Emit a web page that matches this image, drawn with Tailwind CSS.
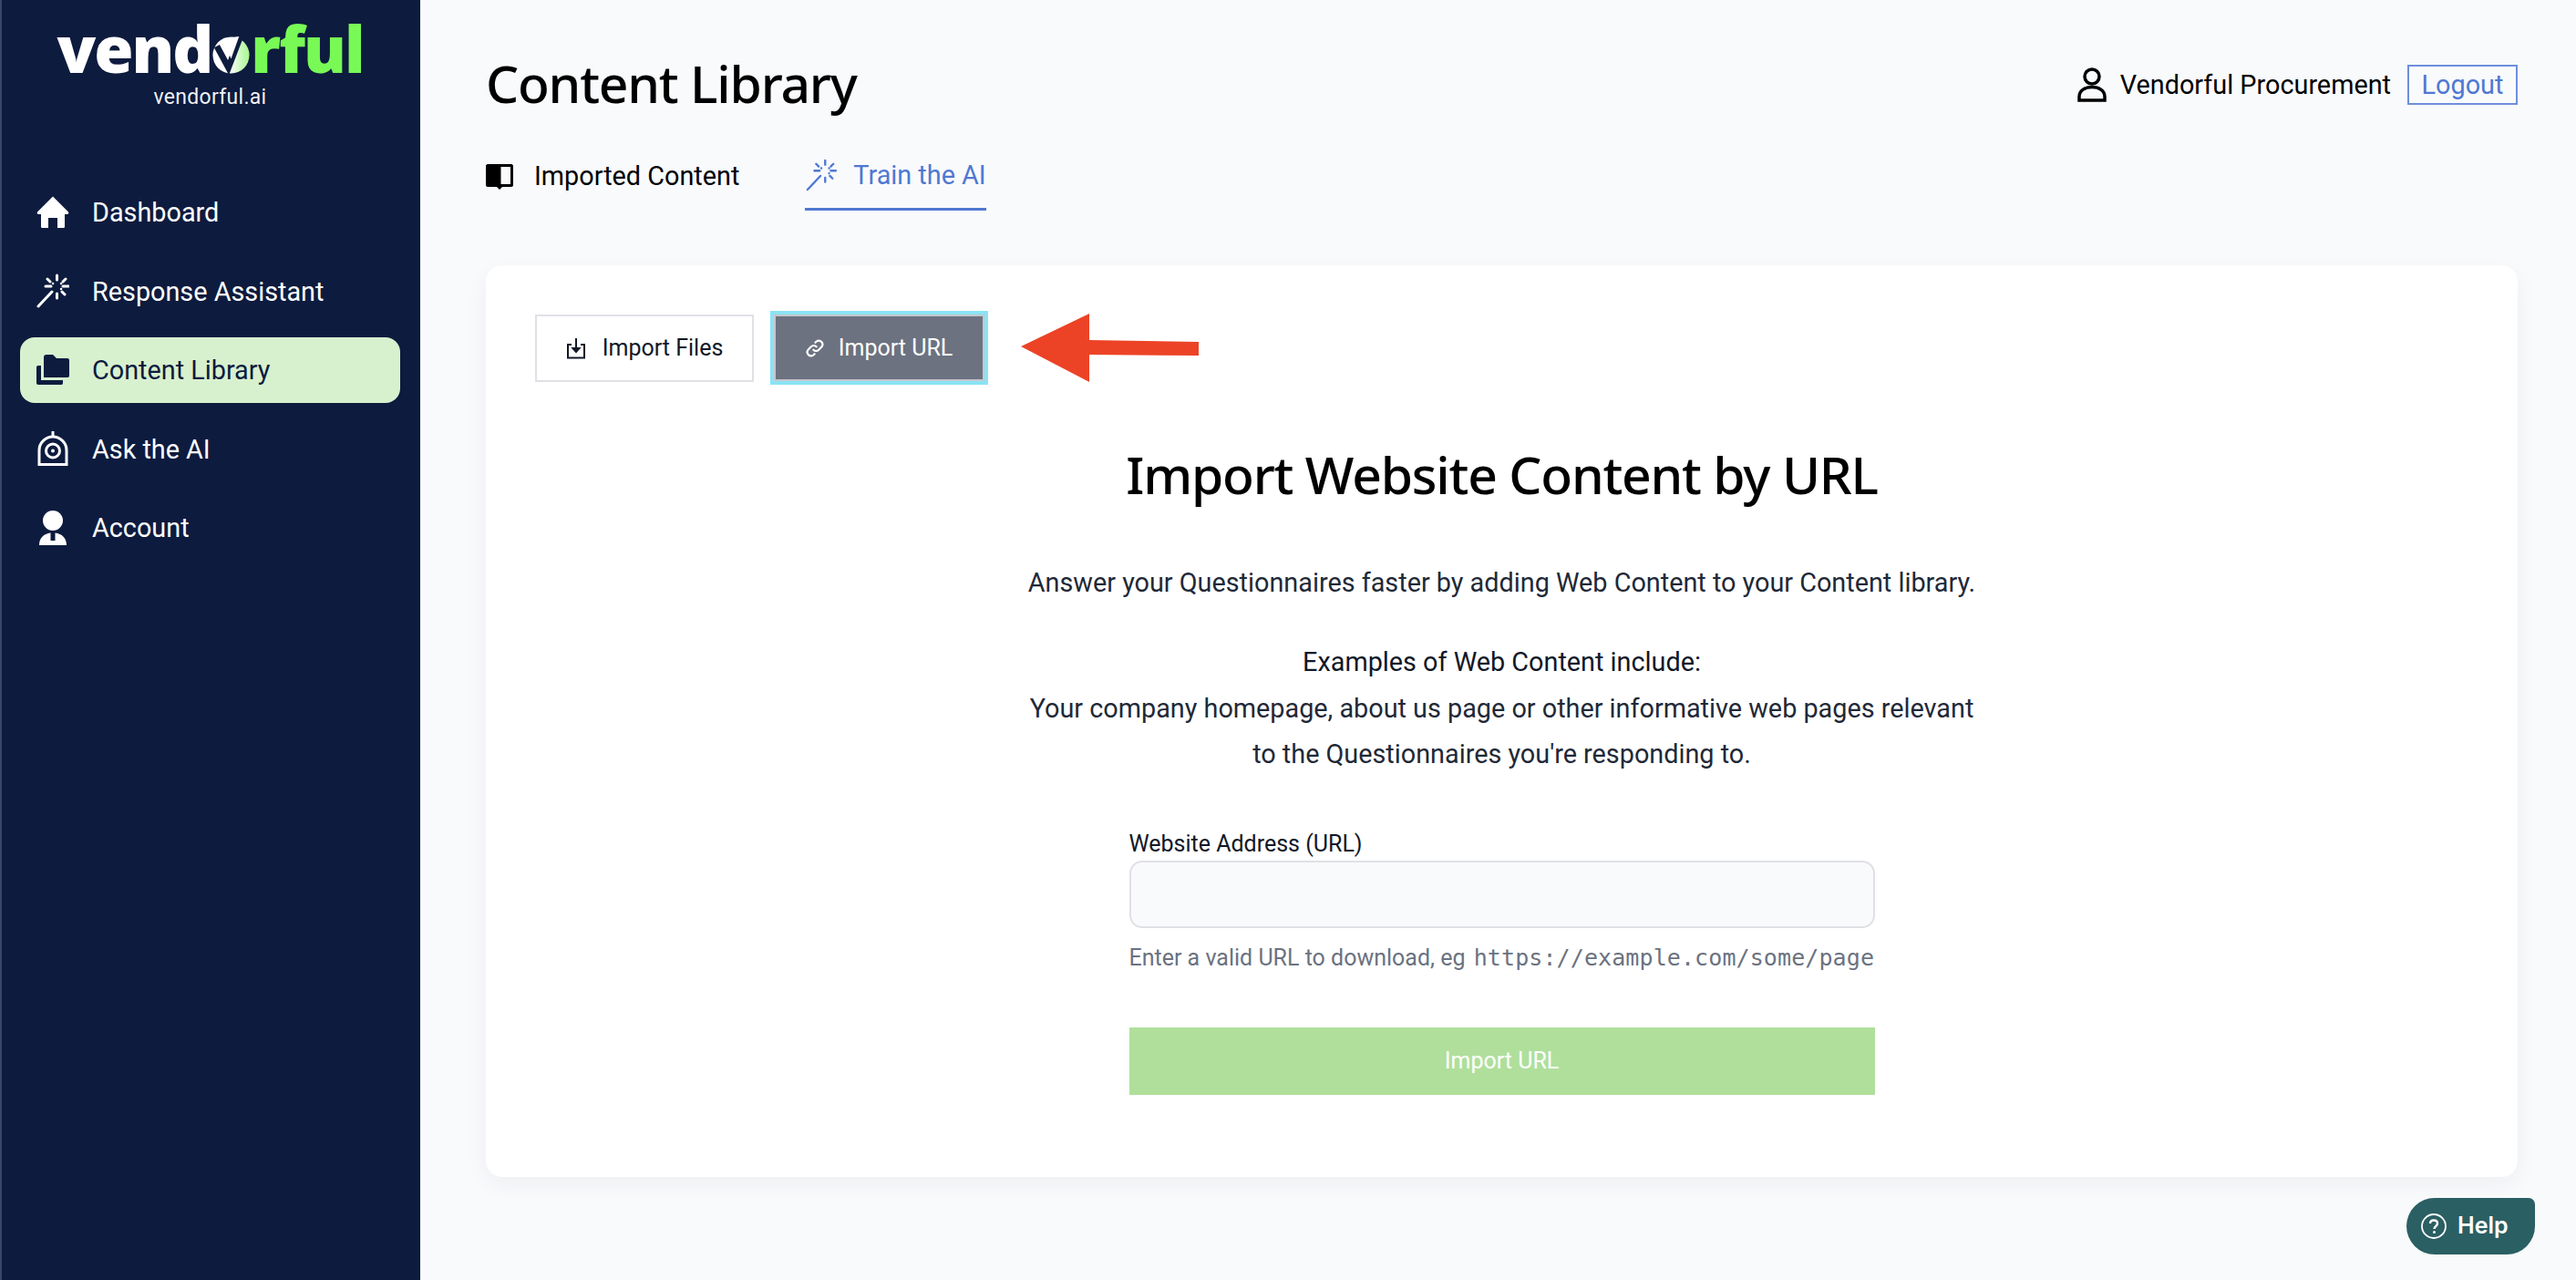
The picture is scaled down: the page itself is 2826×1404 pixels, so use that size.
<!doctype html>
<html lang="en">
<head>
<meta charset="utf-8">
<title>Content Library</title>
<script src="https://cdn.jsdelivr.net/npm/@tailwindcss/browser@4"></script>
</head>
<body class="bg-[#f9fafc] font-['Roboto',sans-serif] text-[28.8px]">
<div class="flex h-[1404px] w-[2826px] overflow-hidden">

  <!-- Sidebar -->
  <aside class="w-[461px] shrink-0 h-full bg-[#0d1b3e] border-l-2 border-[#3a4767] text-white">
    <div class="flex flex-col items-center pt-[25px] h-[197px] pr-[2px]">
      <div class="flex items-end h-[56px] font-['Open_Sans',sans-serif] font-extrabold text-[70px] leading-[56px] tracking-[-2px]">
        <span class="text-white">vend</span>
        <svg class="w-[41px] h-[41px] mx-[1px]" viewBox="0 0 42 42">
          <defs><linearGradient id="lg" x1="0" y1="0" x2="1" y2="0"><stop offset="0.45" stop-color="#ffffff"/><stop offset="1" stop-color="#a6f58e"/></linearGradient></defs>
          <circle cx="21" cy="21" r="20.5" fill="url(#lg)"/>
          <path d="M5 11 L18 35 L31 1" fill="none" stroke="#0d1b3e" stroke-width="7"/>
          <path d="M12 2 L21 25 L30 0 Z" fill="#fff"/>
        </svg>
        <span class="text-[#78f956]">rful</span>
      </div>
      <div class="mt-[11px] text-[23px] leading-[30px] tracking-[0.3px] text-white/95">vendorful.ai</div>
    </div>
    <nav class="flex flex-col gap-[14.4px] pl-[20px] pr-[22px]">
      <a class="flex items-center h-[72px] px-[18px] gap-[25px] rounded-[16px]">
        <svg class="w-[36px] h-[36px]" viewBox="0 0 36 36" fill="#fff"><path d="M18 .5 L35 17.5 C35.8 19 35 20 33.500 20 H31 V33.500 C31 34.500 30.300 35 29.500 35 H23 V24 H13 V35 H6.500 C5.700 35 5 34.500 5 33.500 V20 H2.500 C1 20 .2 19 1 17.500 Z"/></svg>
        <span class="pt-[2px]">Dashboard</span>
      </a>
      <a class="flex items-center h-[72px] px-[18px] gap-[25px] rounded-[16px]">
        <svg class="w-[36px] h-[38px]" viewBox="0 0 36 38" fill="none" stroke="#fff" stroke-linecap="round"><path stroke-width="3" d="M2 36 L17 20"/><path stroke-width="3" d="M22.500 2 V7 M22.500 22 V27 M10 14 H16 M29 14 H35 M12 6 L15 9 M28 20 L31 23 M32 6 L29 9"/><path stroke-width="2.500" d="M18 11 h.1 M27 11 h.1 M27 17 h.1"/></svg>
        <span class="pt-[2px]">Response Assistant</span>
      </a>
      <a class="flex items-center h-[72px] px-[18px] gap-[25px] rounded-[16px] bg-[#d7f1cf] text-[#0d1b3e]">
        <svg class="w-[36px] h-[33px]" viewBox="0 0 36 33" fill="#0d1b3e"><path d="M8 3 C8 1 9 0 11 0 H18 L22 4 H34 C35.500 4 36 5 36 6 V23 C36 24.500 35 25 34 25 H8 Z"/><path d="M2 12 H5 V28 H29 V31 C29 32.500 28 33 27 33 H2 C.8 33 0 32.200 0 31 V14 C0 12.800 .8 12 2 12 Z"/></svg>
        <span class="pt-[2px]">Content Library</span>
      </a>
      <a class="flex items-center h-[72px] px-[18px] gap-[25px] rounded-[16px]">
        <svg class="w-[36px] h-[38px]" viewBox="0 0 36 38" fill="none" stroke="#fff"><path stroke-width="3" d="M18 0 V6"/><path stroke-width="3" d="M3 36.500 V21 C3 12.500 10 6 18 6 C26 6 33 12.500 33 21 V36.500 Z"/><circle cx="18" cy="21.500" r="7.500" stroke-width="3"/><circle cx="18" cy="21.500" r="2" fill="#fff" stroke="none"/></svg>
        <span class="pt-[2px]">Ask the AI</span>
      </a>
      <a class="flex items-center h-[72px] px-[18px] gap-[25px] rounded-[16px]">
        <svg class="w-[36px] h-[38px]" viewBox="0 0 36 38" fill="#fff"><circle cx="18" cy="11" r="11"/><path d="M3 38 C3 30 8 25.500 15.500 24.500 V33 H20.500 V24.500 C28 25.500 33 30 33 38 Z"/></svg>
        <span class="pt-[2px]">Account</span>
      </a>
    </nav>
  </aside>

  <!-- Main -->
  <main class="flex-1 pl-[72px] pr-[64px]">
    <header class="flex justify-between items-start h-[291px]">
      <div>
        <h1 class="pt-[54px] font-['Noto_Sans',sans-serif] font-medium text-[57px] leading-[74px] text-black tracking-[-1.2px]">Content Library</h1>
        <div class="flex mt-[41px] h-[62px] text-black">
          <div class="flex items-center gap-[23px] h-[62px] pb-[14px]">
            <svg class="w-[30px] h-[30px]" viewBox="0 0 30 30"><path fill-rule="evenodd" d="M2 2 H28 C29 2 30 3 30 4 V25 C30 26 29 27 28 27 H18 L15 30 L12 27 H2 C1 27 0 26 0 25 V4 C0 3 1 2 2 2 Z M16.500 5 V24 H27 V5 Z" fill="#000"/></svg>
            <span class="pt-[2px]">Imported Content</span>
          </div>
          <div class="flex items-center gap-[18px] h-[62px] pb-[14px] ml-[72px] border-b-[3px] border-[#4f78d1] text-[#4f78d1]">
            <svg class="w-[34px] h-[38px] ml-[1px]" viewBox="0 0 36 38" fill="none" stroke="#4f78d1" stroke-linecap="round"><path stroke-width="2.500" d="M2 36 L17 20"/><path stroke-width="2.500" d="M22.500 2 V7 M22.500 22 V27 M10 14 H16 M29 14 H35 M12 6 L15 9 M28 20 L31 23 M32 6 L29 9"/><path stroke-width="2.500" d="M18 11 h.1 M27 11 h.1 M27 17 h.1"/></svg>
            <span class="pt-[2px]">Train the AI</span>
          </div>
        </div>
      </div>
      <div class="flex items-center mt-[70px] text-black">
        <svg class="w-[32px] h-[38px]" viewBox="0 0 32 38" fill="none" stroke="#000" stroke-width="3.500"><circle cx="16" cy="10" r="8"/><path d="M2 36 V32 C2 25.500 8 21.500 16 21.500 C24 21.500 30 25.500 30 32 V36 Z"/></svg>
        <span class="ml-[15px] pt-[2px]">Vendorful Procurement</span>
        <a class="ml-[18px] w-[121px] h-[44px] pt-[2px] flex items-center justify-center border-2 border-[#6d8fdb] text-[#4f78d1]">Logout</a>
      </div>
    </header>

    <!-- Card -->
    <section class="bg-white rounded-[18px] shadow-[0_8px_24px_rgba(20,30,60,0.05)] h-[1000px] px-[54px] pt-[54px]">
      <div class="flex items-center h-[73px] text-[25px]">
        <button class="flex items-center justify-center gap-[18px] w-[240px] h-[74px] bg-white border-2 border-[#e0e1e6] text-[#111827]">
          <svg class="w-[22px] h-[24px]" viewBox="0 0 22 24" fill="none" stroke="#111827" stroke-width="2"><path d="M6 8 H2 V22.500 H20 V8 H16"/><path d="M11 1 V15"/><path d="M7.500 12 L11 16 L14.500 12 Z" fill="#111827"/></svg>
          <span>Import Files</span>
        </button>
        <button class="ml-[22px] flex items-center justify-center gap-[16px] w-[231px] h-[73px] bg-[#6c7280] border-2 border-[#c4c7cd] ring-4 ring-[#8be3f5] text-white">
          <svg class="w-[20px] h-[20px]" viewBox="0 0 24 24" fill="none" stroke="#fff" stroke-width="2.600" stroke-linecap="round"><path d="M10 14 a5 5 0 0 0 7 0 l4-4 a5 5 0 0 0-7-7 l-1.500 1.500"/><path d="M14 10 a5 5 0 0 0-7 0 l-4 4 a5 5 0 0 0 7 7 l1.500-1.500"/></svg>
          <span>Import URL</span>
        </button>
        <svg class="ml-[40px] w-[195px] h-[75px]" viewBox="0 0 195 75"><path d="M0 36 L75 0 V29 L195 31 V46 L75 45 V75 Z" fill="#ec4326"/></svg>
      </div>

      <div class="flex flex-col items-center">
        <h2 class="mt-[65px] font-['Noto_Sans',sans-serif] font-medium text-[57px] leading-[74px] text-black tracking-[-1.2px]">Import Website Content by URL</h2>
        <p class="mt-[57px] leading-[50.4px] text-[#1f2937]">Answer your Questionnaires faster by adding Web Content to your Content library.</p>
        <p class="mt-[37px] leading-[50.4px] text-[#1f2937] text-center w-[1100px]"><span class="block text-[#111827]">Examples of Web Content include:</span>Your company homepage, about us page or other informative web pages relevant<br>to the Questionnaires you're responding to.</p>

        <form class="w-[818px] mt-[57px]">
          <label class="block text-[25px] leading-[32px] text-[#111827]">Website Address (URL)</label>
          <input type="text" class="block w-full h-[74px] mt-[2px] bg-[#f9fafb] border-2 border-[#e0e1e6] rounded-[14px]">
          <p class="mt-[15px] text-[25px] leading-[36px] text-[#6b7280] whitespace-nowrap">Enter a valid URL to download, eg <code class="ml-[3px] font-['DejaVu_Sans_Mono',monospace] text-[25px] tracking-[0.1px]">https://example.com/some/page</code></p>
          <button type="button" class="block w-full h-[74px] mt-[58px] bg-[#b0df9c] text-white text-[25px]">Import URL</button>
        </form>
      </div>
    </section>
  </main>
</div>

<!-- Help widget -->
<div class="fixed left-[2640px] top-[1314px] w-[141px] h-[62px] flex items-center gap-[12px] pl-[16px] bg-[#2a5f63] text-white rounded-tl-[31px] rounded-tr-[7px] rounded-br-[31px] rounded-bl-[31px] font-['Inter',sans-serif] font-semibold text-[25px]">
  <svg class="w-[28px] h-[28px]" viewBox="0 0 28 28" fill="none" stroke="#fff" stroke-width="1.800"><circle cx="14" cy="14" r="13"/><path stroke-width="2.400" d="M10 11 C10 8.500 12 7.500 14 7.500 C16.500 7.500 18 9 18 11 C18 14 14.500 14 14.500 17"/><circle cx="14.500" cy="20.500" r="1.500" fill="#fff" stroke="none"/></svg>
  <span>Help</span>
</div>
</body>
</html>
